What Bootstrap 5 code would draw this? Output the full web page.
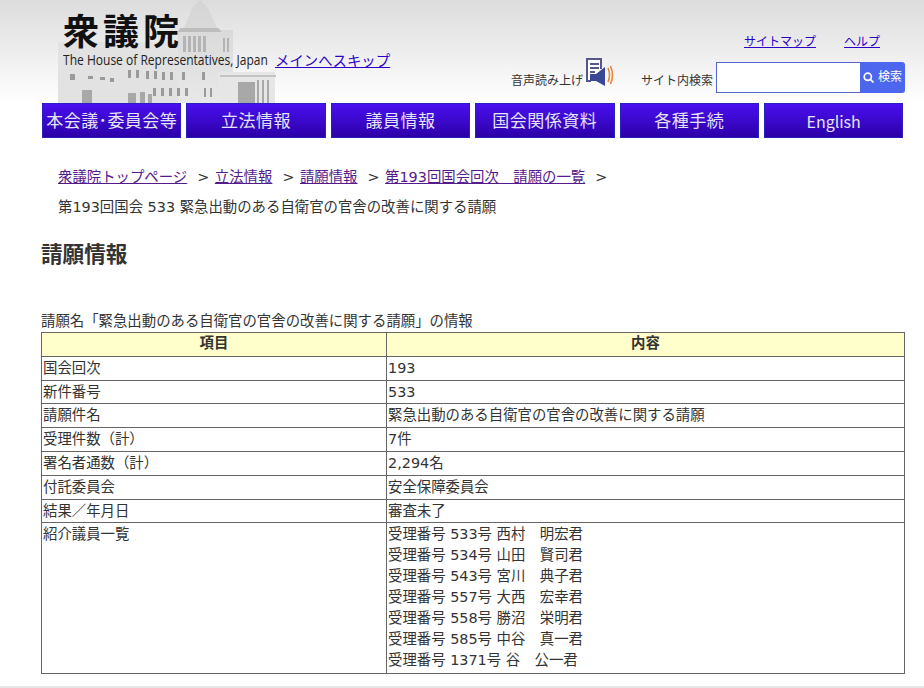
<!DOCTYPE html>
<html lang="ja"><head><meta charset="utf-8"><title>請願情報</title>
<link href="https://cdn.jsdelivr.net/npm/bootstrap@5.3.0/dist/css/bootstrap.min.css" rel="stylesheet">
<style>
html,body{height:688px;overflow:hidden}
body{font-family:"DejaVu Sans","Noto Sans CJK JP",sans-serif;font-size:14.4px;line-height:21px;color:#333;background:#fff}
a{color:#2a00c8}
a.v{color:#551a8b}
.hdr{height:103px;background:linear-gradient(#dcdcdc,#fff);position:relative}
.bld{position:absolute;left:58px;top:0}
.logo{position:absolute;left:63px;top:10px;font-family:"Noto Sans CJK JP",serif;font-weight:700;font-size:36px;line-height:38px;letter-spacing:4px;color:#111}
.sub{position:absolute;left:63px;top:50px;font-family:"Open Sans","Liberation Sans",sans-serif;font-size:14.5px;line-height:20px;color:#222;transform:scaleX(.83);transform-origin:left;white-space:nowrap}
.skip{position:absolute;left:275px;top:51px}
.util{position:absolute;top:32px;left:744px;font-size:12px;gap:28px}
.tool{position:absolute;top:58px;left:511px;font-size:12px;width:394px;height:35px}
.voice{width:74px;margin-top:13px;white-space:nowrap}
.lbl{margin-top:13px;margin-right:3px;white-space:nowrap}
.q{width:144px;height:31px;margin-top:4px;border:1px solid #5566cc;background:#fff;border-right:0;border-radius:0}
.qb{height:31px;margin-top:4px;width:45px;background:#4d66ee;color:#fff;border:0;padding:0;font-size:12px;border-radius:0 3px 3px 0;white-space:nowrap}
.mnav{padding:0 0 0 42px;gap:5px}
.mnav a{width:139.4px;height:35px;background:linear-gradient(#4a10f0,#2c00a8);border:1px solid #2a20c0;color:#e4e4f4;font-size:17px;line-height:35px;text-align:center;text-decoration:none;letter-spacing:.5px;white-space:nowrap;flex:none}
.mnav a.tight{letter-spacing:.4px;padding:0}
.mnav a.en{font-family:"Noto Sans CJK JP",sans-serif;font-size:16px;letter-spacing:0}
.crumb{padding:29px 0 0 58px;line-height:21px;white-space:nowrap}
.crumb span{margin:0 5.5px 0 10px}
.cur{padding:9px 0 0 58px}
h1{font-size:21.6px;font-weight:700;margin:25px 0 0 41px;line-height:24px;color:#333}
.cap{margin:44px 0 0 41px;line-height:21px;height:21px}
.tb{margin:0 0 0 41px;width:864px;border-collapse:collapse;table-layout:fixed;color:#333}
.tb td,.tb th{border:1px solid #666;padding:0 1px;line-height:21px;height:23.8px;font-weight:400;vertical-align:top;background:#fff;color:#333}
.tb td{padding-top:1px}
.tb .last td{padding-bottom:2px}
.tb th{background:#ffc;text-align:center;font-weight:700}
.foot{position:absolute;left:0;right:0;top:686px;height:2px;background:#e6e6e6}
</style></head><body>
<div class="hdr">
<svg class="bld" width="220" height="103" viewBox="0 0 220 103">
<defs><linearGradient id="f" x1="0" y1="0" x2="0" y2="1"><stop offset="0" stop-color="#d4d4d4"/><stop offset="1" stop-color="#e8e8e8"/></linearGradient></defs>
<path d="M0 42h120V103H0z" fill="#e2e2e2"/>
<path d="M142 0l8 8 9 20 2 2h14v46h-8V103H120V30h2l4-2 8-20z" fill="url(#f)"/>
<path d="M160 72h57v31h-57z" fill="#e6e6e6"/>
<path d="M122 28h38l4 4H120z" fill="#bdbdbd"/>
<g fill="#b0b0b0" opacity=".9"><rect x="125" y="36" width="3" height="16"/><rect x="130" y="36" width="3" height="16"/><rect x="135" y="36" width="3" height="16"/><rect x="140" y="36" width="3" height="16"/><rect x="145" y="36" width="3" height="16"/><rect x="165" y="38" width="2" height="14"/><rect x="169" y="38" width="2" height="14"/></g>
<g fill="#9a9a9a">
<rect x="12" y="74" width="5" height="6"/><rect x="30" y="76" width="5" height="3"/><rect x="42" y="77" width="5" height="3"/><rect x="52" y="78" width="4" height="4"/><rect x="70" y="70" width="3" height="8"/><rect x="78" y="70" width="3" height="8"/><rect x="88" y="71" width="3" height="8"/><rect x="96" y="71" width="3" height="8"/><rect x="104" y="72" width="3" height="8"/><rect x="112" y="72" width="3" height="8"/><rect x="124" y="72" width="3" height="8"/><rect x="144" y="72" width="3" height="8"/>
<rect x="95" y="88" width="3" height="8"/><rect x="103" y="88" width="3" height="8"/><rect x="111" y="88" width="3" height="8"/><rect x="119" y="88" width="3" height="8"/><rect x="127" y="88" width="3" height="8"/><rect x="146" y="88" width="2" height="9"/><rect x="152" y="88" width="2" height="9"/>
</g>
<g fill="#a8a8a8"><rect x="24" y="90" width="10" height="13"/><rect x="70" y="93" width="8" height="10"/><rect x="82" y="92" width="5" height="11"/><rect x="90" y="94" width="4" height="9"/><rect x="180" y="82" width="17" height="21"/><rect x="199" y="80" width="2" height="23"/><rect x="204" y="80" width="2" height="23"/><rect x="209" y="80" width="2" height="23"/></g>
<path d="M162 76h56" stroke="#c4c4c4" stroke-width="2"/>
</svg>
<div class="logo">衆議院</div>
<div class="sub">The House of Representatives, Japan</div>
<a class="skip" href="#">メインへスキップ</a>
<div class="util d-flex"><a href="#">サイトマップ</a><a href="#">ヘルプ</a></div>
<div class="tool d-flex">
<div class="voice">音声読み上げ</div>
<svg width="30" height="28" viewBox="0 0 30 28"><path d="M6 23H2V1h14v10" fill="#fff" stroke="#55558f" stroke-width="2"/><path d="M5 6h9M5 10h9M5 14h5" stroke="#55558f" stroke-width="2"/><path d="M5 16h6l9-7v19l-9-5H5z" fill="#3b4795"/><path d="M23 10q3 7 0 14M25.500 8q4 9 0 18" fill="none" stroke="#e8853a" stroke-width="1.6"/></svg>
<div class="ms-auto d-flex"><div class="lbl">サイト内検索</div><input class="q" aria-label="検索"><button class="qb"><svg width="11" height="11" viewBox="0 0 11 11" class="me-1"><circle cx="4.800" cy="4.800" r="3.600" fill="none" stroke="#fff" stroke-width="1.700"/><path d="M7.500 7.500l3 3" stroke="#fff" stroke-width="1.700"/></svg>検索</button></div>
</div>
</div>
<nav class="mnav d-flex"><a class="tight" href="#">本会議･委員会等</a><a href="#">立法情報</a><a href="#">議員情報</a><a href="#">国会関係資料</a><a href="#">各種手続</a><a class="en" href="#">English</a></nav>
<div class="crumb"><a class="v" href="#">衆議院トップページ</a><span>&gt;</span><a class="v" href="#">立法情報</a><span>&gt;</span><a class="v" href="#">請願情報</a><span>&gt;</span><a class="v" href="#">第193回国会回次　請願の一覧</a><span>&gt;</span></div>
<div class="cur">第193回国会 533 緊急出動のある自衛官の官舎の改善に関する請願</div>
<h1>請願情報</h1>
<div class="cap">請願名「緊急出動のある自衛官の官舎の改善に関する請願」の情報</div>
<table class="tb">
<colgroup><col style="width:345px"><col></colgroup>
<tr><th>項目</th><th>内容</th></tr>
<tr><td>国会回次</td><td>193</td></tr>
<tr><td>新件番号</td><td>533</td></tr>
<tr><td>請願件名</td><td>緊急出動のある自衛官の官舎の改善に関する請願</td></tr>
<tr><td>受理件数（計）</td><td>7件</td></tr>
<tr><td>署名者通数（計）</td><td>2,294名</td></tr>
<tr><td>付託委員会</td><td>安全保障委員会</td></tr>
<tr><td>結果／年月日</td><td>審査未了</td></tr>
<tr class="last"><td>紹介議員一覧</td><td>受理番号 533号 西村　明宏君<br>受理番号 534号 山田　賢司君<br>受理番号 543号 宮川　典子君<br>受理番号 557号 大西　宏幸君<br>受理番号 558号 勝沼　栄明君<br>受理番号 585号 中谷　真一君<br>受理番号 1371号 谷　公一君</td></tr>
</table>
<div class="foot"></div>
<script src="https://cdn.jsdelivr.net/npm/bootstrap@5.3.0/dist/js/bootstrap.bundle.min.js"></script>
</body></html>
